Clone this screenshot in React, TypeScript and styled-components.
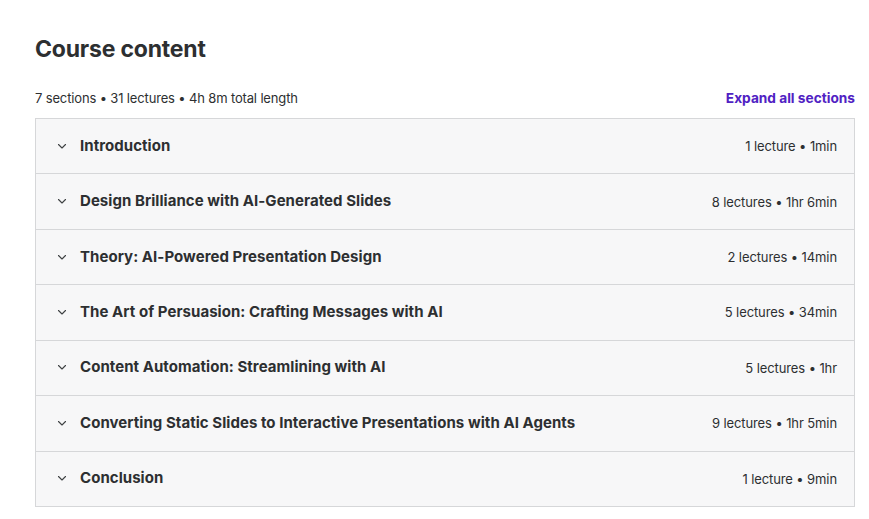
import styled, { createGlobalStyle } from "styled-components";

const GlobalStyle = createGlobalStyle`
  html, body {
    margin: 0;
    padding: 0;
    background: #ffffff;
  }
  body {
    font-family: Inter, "Noto Sans", Arial, sans-serif;
    color: #2d2f31;
  }
`;

/* --- styled components --- */

const Page = styled.div`
  width: 820px;
  padding: 33px 0 0 35px;
`;

const Heading = styled.h2`
  margin: 0 0 23px 0;
  font-size: 23px;
  line-height: 32px;
  font-weight: 700;
  letter-spacing: -0.2px;
  color: #2d2f31;
`;

const Meta = styled.div`
  display: flex;
  justify-content: space-between;
  align-items: flex-end;
  margin-bottom: 10px;
`;

const Stats = styled.span`
  font-size: 13px;
  line-height: 20px;
  letter-spacing: -0.15px;
  color: #2d2f31;
`;

const ExpandButton = styled.button`
  border: 0;
  background: none;
  padding: 0;
  font: inherit;
  font-size: 13.7px;
  line-height: 20px;
  font-weight: 700;
  color: #5022c3;
  cursor: pointer;
`;

const Panel = styled.div`
  border: 1px solid #d6d7d9;
`;

const Row = styled.div`
  display: flex;
  align-items: center;
  height: 54.43px;
  padding: 0 17px 0 21px;
  background: #f7f7f8;

  & + & {
    border-top: 1px solid #d6d7d9;
  }
`;

const Chevron = styled.svg`
  width: 10px;
  height: 10px;
  margin-right: 13px;
  margin-top: -1px;
  flex: none;
`;

const Title = styled.span`
  flex: 1;
  font-size: 15px;
  font-weight: 700;
  letter-spacing: 0.05px;
  color: #2d2f31;
  transform: translateY(-1px);
`;

const Info = styled.span`
  font-size: 13px;
  letter-spacing: -0.1px;
  color: #2d2f31;
`;

/* --- data --- */

const sections = [
  { title: "Introduction", info: "1 lecture • 1min" },
  { title: "Design Brilliance with AI-Generated Slides", info: "8 lectures • 1hr 6min" },
  { title: "Theory: AI-Powered Presentation Design", info: "2 lectures • 14min" },
  { title: "The Art of Persuasion: Crafting Messages with AI", info: "5 lectures • 34min" },
  { title: "Content Automation: Streamlining with AI", info: "5 lectures • 1hr" },
  {
    title: "Converting Static Slides to Interactive Presentations with AI Agents",
    info: "9 lectures • 1hr 5min",
  },
  { title: "Conclusion", info: "1 lecture • 9min" },
];

/* --- component --- */

export default function App() {
  return (
    <>
      <GlobalStyle />
      <Page>
        <Heading>Course content</Heading>
        <Meta>
          <Stats>7 sections • 31 lectures • 4h 8m total length</Stats>
          <ExpandButton>Expand all sections</ExpandButton>
        </Meta>
        <Panel>
          {sections.map((s) => (
            <Row key={s.title}>
              <Chevron viewBox="0 0 10 10">
                <path
                  d="M1.5 3.5 L5 7 L8.5 3.5"
                  fill="none"
                  stroke="#3e4143"
                  strokeWidth="1.1"
                  strokeLinecap="round"
                  strokeLinejoin="round"
                />
              </Chevron>
              <Title>{s.title}</Title>
              <Info>{s.info}</Info>
            </Row>
          ))}
        </Panel>
      </Page>
    </>
  );
}
